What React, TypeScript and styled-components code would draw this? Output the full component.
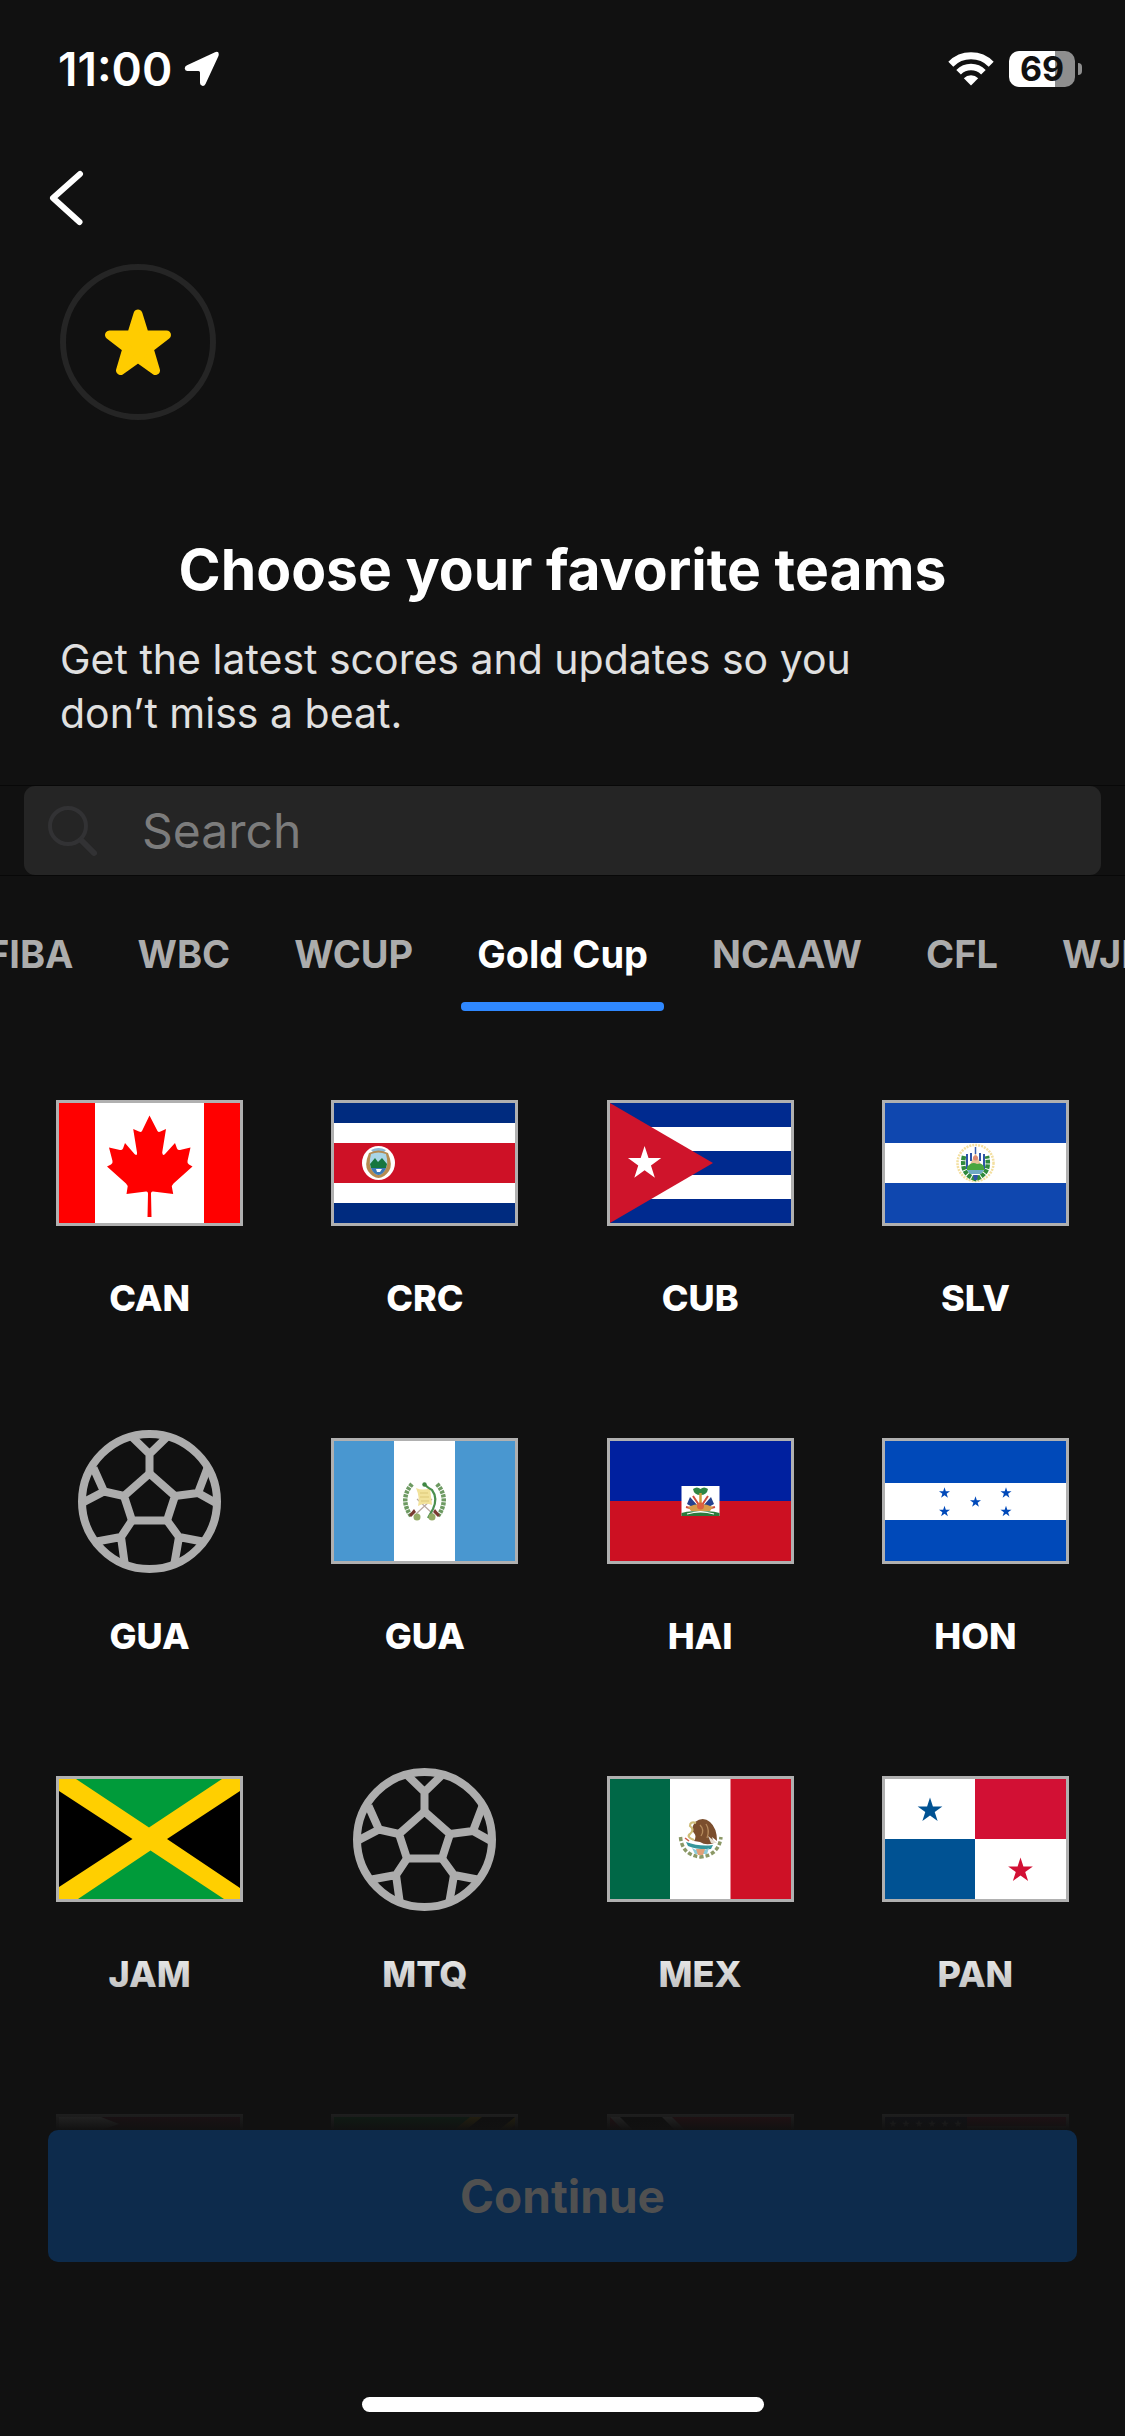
import React, { useLayoutEffect, useRef, useState } from "react";
import styled, { createGlobalStyle } from "styled-components";

const GlobalStyle = createGlobalStyle`
  *, *::before, *::after { box-sizing: border-box; }
  body { margin: 0; background: #111111; }
  button, input { font: inherit; color: inherit; }
`;

const Screen = styled.main`
  display: flex;
  flex-direction: column;
  height: 100vh;
  overflow: hidden;
  background: #111111;
  color: #ffffff;
  font-family: Inter, "Liberation Sans", sans-serif;
`;

const StatusBar = styled.div`
  display: flex;
  align-items: center;
  justify-content: space-between;
  flex: none;
  height: 138px;
  padding: 0 43px 0 58px;
`;

const StatusGroup = styled.div<{ $gap: number }>`
  display: flex;
  align-items: center;
  gap: ${(p) => p.$gap}px;
`;

const Clock = styled.time`
  font-size: 46px;
  line-height: 54px;
  font-weight: 600;
`;

const Battery = styled.div`
  display: flex;
  align-items: center;
  gap: 3px;
`;

const BatteryBody = styled.div`
  display: flex;
  align-items: center;
  justify-content: center;
  width: 66px;
  height: 36px;
  border-radius: 10px;
  background: linear-gradient(to right, #ffffff 69%, #8e8e8e 69%);
  color: #111111;
  font-size: 34px;
  line-height: 36px;
  font-weight: 700;
`;

const BatteryTip = styled.div`
  width: 4px;
  height: 12px;
  border-radius: 0 4px 4px 0;
  background: #8e8e8e;
`;

const BackButton = styled.button`
  display: flex;
  align-items: center;
  justify-content: center;
  flex: none;
  width: 132px;
  height: 120px;
  padding: 0;
  border: 0;
  background: none;
`;

const Intro = styled.header`
  display: flex;
  flex-direction: column;
  flex: none;
  padding: 6px 60px 0;
`;

const StarBadge = styled.div`
  display: flex;
  align-items: center;
  justify-content: center;
  width: 156px;
  height: 156px;
  border: 6px solid #252525;
  border-radius: 50%;
`;

const Title = styled.h1`
  margin: 114px 0 0;
  font-size: 57px;
  line-height: 72px;
  font-weight: 700;
  text-align: center;
`;

const Subtitle = styled.p`
  max-width: 860px;
  margin: 26px 0 0;
  font-size: 41px;
  line-height: 54px;
  color: #e0e0e0;
`;

const SearchBar = styled.div`
  flex: none;
  margin-top: 45px;
  padding: 0 24px;
  border: solid #080808;
  border-width: 1px 0;
`;

const SearchField = styled.label`
  display: flex;
  align-items: center;
  gap: 40px;
  height: 89px;
  padding: 0 24px;
  border-radius: 11px;
  background: #252525;
`;

const SearchInput = styled.input`
  flex: 1;
  min-width: 0;
  padding: 0;
  border: 0;
  outline: 0;
  background: none;
  font-size: 48px;
  line-height: 60px;
  &::placeholder { color: #7c7c7c; opacity: 1; }
`;

const Tabs = styled.div`
  display: flex;
  flex: none;
  gap: 32px;
  margin-top: 54px;
  padding-right: 50%;
  overflow-x: auto;
  scrollbar-width: none;
`;

const Tab = styled.button<{ $active: boolean }>`
  flex: none;
  padding: 0 16px 24px;
  border: 0;
  background: none;
  color: ${(p) => (p.$active ? "#ffffff" : "#acacac")};
  font-size: 38px;
  line-height: 48px;
  font-weight: 700;
  white-space: nowrap;
`;

const TabItem = styled.div<{ $active: boolean }>`
  display: flex;
  flex-direction: column;
  flex: none;
  &::after {
    content: "";
    height: 9px;
    border-radius: 4px;
    background: ${(p) => (p.$active ? "#2f88ff" : "transparent")};
  }
`;

const ListFrame = styled.section`
  position: relative;
  flex: 1;
  min-height: 0;
`;

const TeamList = styled.div`
  display: grid;
  grid-template-columns: repeat(4, minmax(0, 1fr));
  align-content: start;
  row-gap: 88px;
  height: 100%;
  padding: 58px 12px 0;
  overflow-y: auto;
  scrollbar-width: none;
`;

const ListFade = styled.div`
  position: absolute;
  inset: auto 0 0;
  height: 190px;
  background: linear-gradient(to bottom, rgba(17, 17, 17, 0), #111111);
  pointer-events: none;
`;

const TeamButton = styled.button`
  display: flex;
  flex-direction: column;
  align-items: center;
  gap: 20px;
  padding: 0;
  border: 0;
  background: none;
  font-size: 36px;
  line-height: 42px;
  font-weight: 800;
`;

const TeamArt = styled.span`
  display: flex;
  align-items: center;
  justify-content: center;
  width: 187px;
  height: 188px;
`;

const FlagSvg = styled.svg`
  display: block;
  width: 187px;
  height: 126px;
  border: 3px solid #b0b0b0;
`;

const Footer = styled.footer`
  display: flex;
  flex-direction: column;
  align-items: center;
  flex: none;
  padding: 0 48px 24px;
`;

const ContinueButton = styled.button`
  width: 100%;
  height: 132px;
  border: 0;
  border-radius: 10px;
  background: #0d2b4c;
  color: #505050;
  font-size: 46px;
  line-height: 54px;
  font-weight: 700;
`;

const HomeIndicator = styled.div`
  width: 402px;
  height: 15px;
  margin-top: 135px;
  border-radius: 8px;
  background: #ffffff;
`;

/* Points of a five-pointed star centred on (cx, cy). */
function starPoints(cx: number, cy: number, r: number) {
  return Array.from({ length: 10 }, (_, i) => {
    const radius = i % 2 ? r * 0.382 : r;
    const a = (Math.PI / 5) * i - Math.PI / 2;
    return `${(cx + radius * Math.cos(a)).toFixed(2)},${(cy + radius * Math.sin(a)).toFixed(2)}`;
  }).join(" ");
}

const Star = ({ x, y, r, fill }: { x: number; y: number; r: number; fill: string }) => (
  <polygon points={starPoints(x, y, r)} fill={fill} />
);

const Flag = ({ children }: { children: React.ReactNode }) => (
  <FlagSvg viewBox="0 0 181 120" preserveAspectRatio="none" aria-hidden="true">
    {children}
  </FlagSvg>
);

const Canada = () => (
  <Flag>
    <rect width="181" height="120" fill="#ff0000" />
    <rect x="36" width="109" height="120" fill="#ffffff" />
    <path
      fill="#ff0000"
      d="M90.5 12.5 L98.5 28 Q99.5 29.5 101.500 28.500 L107 26 L103.200 49.500 Q103.500 53.500 106 51 L116 40 L118 45.500 Q119 47.500 121 47 L131.500 44.500 L128.500 58 Q128 60.500 130 61.500 L133.500 63.500 L114.500 80.500 Q112.500 82.500 113 84.500 L114.200 91 L94 88.500 Q92 88.300 92 90.500 L92.500 114 H88.500 L89 90.500 Q89 88.300 87 88.500 L67.500 91 L68.500 84.500 Q69 82.500 67 80.500 L48 63.500 L52 61.500 Q54 60.500 53.500 58 L50 44.500 L61 47 Q63 47.500 64 45.500 L66 40 L75.500 51 Q78.500 53.500 78 49.500 L74.200 26 L80 28.500 Q82 29.500 83 28 Z"
    />
  </Flag>
);

const CostaRica = () => (
  <Flag>
    <rect width="181" height="120" fill="#002b7f" />
    <rect y="20" width="181" height="80" fill="#ffffff" />
    <rect y="40" width="181" height="40" fill="#ce1126" />
    <ellipse cx="44.500" cy="60" rx="16.500" ry="17" fill="#ffffff" />
    <path d="M37 47 Q44.500 43 52 47 L49 50 Q44.500 48 40 50Z" fill="#8db9d8" />
    <path d="M35 50 Q44.500 45 54 50 Q59 62 55 68 Q50 75 44.500 75 Q39 75 34 68 Q30 62 35 50Z" fill="#b58b50" />
    <path d="M37 51 Q44.500 48 52 51 Q55 62 51 67 Q48 72 44.500 72 Q41 72 38 67 Q34 62 37 51Z" fill="#a9d5e6" />
    <path d="M36 61 L41 55 L44 59 L48 55 L53 61 L52 65 H37Z" fill="#16763f" />
    <path d="M37 65 H52 Q49 72 44.500 72 Q40 72 37 65Z" fill="#3a78b8" />
    <path d="M42 66 H48 L46 69 H43Z" fill="#ffffff" />
  </Flag>
);

const Cuba = () => (
  <Flag>
    <rect width="181" height="120" fill="#002a8f" />
    <rect y="24" width="181" height="24" fill="#ffffff" />
    <rect y="72" width="181" height="24" fill="#ffffff" />
    <path d="M0 0 L103 60 L0 120Z" fill="#cf142b" />
    <Star x={34.6} y={60.5} r={17.5} fill="#ffffff" />
  </Flag>
);

const ElSalvador = () => (
  <Flag>
    <rect width="181" height="120" fill="#0f47af" />
    <rect y="40" width="181" height="40" fill="#ffffff" />
    <circle cx="90.500" cy="60" r="18" fill="none" stroke="#f3dfa0" strokeWidth="2.500" strokeDasharray="2 1" />
    <path d="M79 53 Q75 71 90.500 76 Q106 71 102 53" fill="none" stroke="#2f8a3c" strokeWidth="4.500" strokeDasharray="4 1" />
    <path d="M82 51 V66 M99 51 V66 M86 50 V58 M95 50 V58" stroke="#2f55a8" strokeWidth="2" />
    <path d="M90.500 50 L98 66 H83Z" fill="#e9c39b" />
    <circle cx="90.500" cy="55" r="2.500" fill="#dd8a72" />
    <path d="M82 64 Q87 58 92 61 Q97 59 99 64 V67 H82Z" fill="#4aa63f" />
    <path d="M82 67 H99 L96 71 H85Z" fill="#6faac4" />
    <path d="M90.500 44 V51" stroke="#3a5fae" strokeWidth="1.500" />
    <path d="M88 72 H93 L92 77 H89Z" fill="#2f55a8" />
  </Flag>
);

const Guatemala = () => (
  <Flag>
    <rect width="181" height="120" fill="#4997d0" />
    <rect x="60" width="61" height="120" fill="#ffffff" />
    <g fill="none" strokeDasharray="3 1">
      <path d="M78 43 Q65 58 77 75" stroke="#6d9a62" strokeWidth="4.500" />
      <path d="M103 43 Q116 58 104 75" stroke="#6d9a62" strokeWidth="4.500" />
    </g>
    <path d="M82 73 L98 58 M99 73 L83 58" stroke="#b9a9a0" strokeWidth="1.200" />
    <path d="M82 47 Q89 50 96 47 L98 64 Q91 61 84 65 Q86 56 82 47Z" fill="#f2e29a" />
    <path d="M86 52 H94 M86 56 H95 M87 60 H95" stroke="#dcc878" strokeWidth="1" />
    <path d="M90 43 Q94 47 98 49 Q104 57 99 68 L94 77" fill="none" stroke="#4b8f4e" strokeWidth="2.200" />
    <circle cx="90.500" cy="43.500" r="2.200" fill="#3f8743" />
    <path d="M75 74 L80 68 L82 71 L77 76Z M106 74 L101 68 L99 71 L104 76Z" fill="#7a3b32" />
    <circle cx="83" cy="76" r="3.500" fill="#94ab66" />
    <circle cx="98" cy="76" r="3.500" fill="#94ab66" />
  </Flag>
);

const Haiti = () => (
  <Flag>
    <rect width="181" height="60" fill="#00209f" />
    <rect y="60" width="181" height="60" fill="#cc1022" />
    <rect x="71.500" y="45" width="38" height="30" fill="#ffffff" />
    <path d="M71.500 75 V72 Q80 69 90.500 71 Q101 69 109.500 72 V75Z" fill="#2c7a3c" />
    <path d="M77 73 Q90.500 69 104 73" fill="none" stroke="#ffffff" strokeWidth="1.200" />
    <path d="M83 48 Q87 45 90.500 48 Q94 45 98 48 Q97 54 90.500 54 Q84 54 83 48Z" fill="#2f8544" />
    <path d="M90.500 52 V68" stroke="#cf9d3a" strokeWidth="2.500" />
    <path d="M77 63 L80 56 L88 65 L86 68Z M104 63 L101 56 L93 65 L95 68Z" fill="#24418f" />
    <path d="M83 55 L89 64 M98 55 L92 64 M76 66 L84 68 M105 66 L97 68" stroke="#cf4b3d" strokeWidth="2" />
    <path d="M78 66 Q90.500 60 103 66 L100 70 H81Z" fill="#d69c4a" />
    <circle cx="90.500" cy="65" r="3.500" fill="#dc6240" />
  </Flag>
);

const Honduras = () => (
  <Flag>
    <rect width="181" height="120" fill="#0049b9" />
    <rect y="42" width="181" height="37" fill="#ffffff" />
    {[[59.5, 52], [59.5, 70.5], [90.5, 61], [121, 52], [121, 70.5]].map(([x, y]) => (
      <Star key={`${x}-${y}`} x={x} y={y} r={5.8} fill="#0049b9" />
    ))}
  </Flag>
);

const Jamaica = () => (
  <Flag>
    <rect width="181" height="120" fill="#ffcf00" />
    <path d="M17 0 H163 L90 48.500Z M19 120 H165 L91.500 71.500Z" fill="#009b3a" />
    <path d="M0 12 L73.500 60 L0 108Z M181 12 L108 60 L181 109Z" fill="#000000" />
  </Flag>
);

const Mexico = () => (
  <Flag>
    <rect width="181" height="120" fill="#ffffff" />
    <rect width="60" height="120" fill="#006847" />
    <rect x="120.500" width="61" height="120" fill="#ce1126" />
    <path d="M70.500 58 Q72 76 90.500 78 Q109 76 111 58" fill="none" stroke="#8b9866" strokeWidth="3.500" strokeDasharray="4 2" />
    <path d="M85 43 Q93 37 100 43 Q107 49 107 62 L102 58 L104 64 Q96 67 90 63 L84 62 Q87 57 84 54 Q80 51 85 43Z" fill="#7b4e2d" />
    <path d="M90 46 Q95 51 91 57 M96 45 Q100 51 97 59" fill="none" stroke="#b58a5c" strokeWidth="1.300" />
    <path d="M98 57 L107 64 L101 64Z" fill="#e8ddd2" />
    <path d="M86 44 Q80 42 80 47 Q85 51 80 55 Q76 58 84 61" fill="none" stroke="#cfbd78" strokeWidth="2.200" />
    <path d="M76 63 Q90 68 103 66 L101 70 Q88 71 78 67Z" fill="#36979b" />
    <path d="M82 69 Q90 74 99 69 L97 75 H85Z" fill="#8ecbd9" />
    <path d="M86 70 H95 L93 76 H88Z" fill="#e2a078" />
    <path d="M75 59 L79 62" stroke="#cc5a48" strokeWidth="1.500" />
  </Flag>
);

const Panama = () => (
  <Flag>
    <rect width="181" height="120" fill="#ffffff" />
    <rect x="90" width="91" height="60" fill="#d21034" />
    <rect y="60" width="90" height="60" fill="#005293" />
    <Star x={45} y={31.5} r={13} fill="#005293" />
    <Star x={135.5} y={91.5} r={13} fill="#d21034" />
  </Flag>
);

const Qatar = () => (
  <Flag>
    <rect width="181" height="120" fill="#ffffff" />
    <path d="M181 0 H42 L60 7 L42 13 L60 20 L42 27 L60 33 L42 40 L60 47 L42 53 L60 60 L42 67 L60 73 L42 80 L60 87 L42 93 L60 100 L42 107 L60 113 L42 120 H181Z" fill="#8a1538" />
  </Flag>
);

const SaintKitts = () => (
  <Flag>
    <rect width="181" height="120" fill="#009739" />
    <path d="M181 0 V120 H0Z" fill="#c8102e" />
    <path d="M-10 120 L136 0 H191 L41 120Z" fill="#ffcd00" />
    <path d="M0 120 L148 0 H181 L33 120Z" fill="#000000" />
  </Flag>
);

const Trinidad = () => (
  <Flag>
    <rect width="181" height="120" fill="#da1a35" />
    <path d="M0 0 H62 L181 120 H119Z" fill="#ffffff" />
    <path d="M10 0 H52 L171 120 H129Z" fill="#000000" />
  </Flag>
);

const UnitedStates = () => (
  <Flag>
    <rect width="181" height="120" fill="#ffffff" />
    {[0, 1, 2, 3, 4, 5, 6].map((i) => (
      <rect key={i} y={i * 18.5} width="181" height="9.250" fill="#bb133e" />
    ))}
    <rect width="82" height="65" fill="#1a2350" />
    {[8, 21, 34, 47, 60, 73].map((x) => (
      <Star key={x} x={x} y={7} r={4} fill="#ffffff" />
    ))}
  </Flag>
);

const Ball = () => (
  <svg width="143" height="143" viewBox="0 0 143 143" fill="none" stroke="#adadad" strokeWidth="8" aria-hidden="true">
    <circle cx="71.500" cy="71.500" r="67.500" />
    <path d="M71.500 43.500 L97 66 L89 90.500 H54 L46 66Z" />
    <path d="M71.500 43.500 V24 M53 6 L71.500 24 L90 6" />
    <path d="M97 66 L120 63 M129.500 38 L120 63 L138 73" />
    <path d="M46 66 L26 61.500 M15.500 38 L26 61.500 L4 73" />
    <path d="M89 90.500 L101 107 M127 112 L101 107 L96 136" />
    <path d="M54 90.500 L43 107 M16 112 L43 107 L47 136" />
  </svg>
);

const LocationArrow = () => (
  <svg width="36" height="36" viewBox="0 0 36 36" aria-hidden="true">
    <path
      d="M31 1.200 Q35.500 -0.300 34.600 4.500 Q34.400 5.300 34 6 L21.500 33 Q20.300 35.300 18.200 34.800 Q16 34.300 16 32 V21.500 Q16 20 14.500 20 H3.500 Q1.200 20 0.800 17.800 Q0.500 15.500 3 14.300Z"
      fill="#ffffff"
    />
  </svg>
);

const Wifi = () => (
  <svg width="46" height="34" viewBox="0 0 46 34" aria-hidden="true">
    <g fill="none" stroke="#ffffff">
      <path d="M2.800 12.200 A28.500 28.500 0 0 1 43.200 12.200" strokeWidth="7" />
      <path d="M10.600 20.200 A17.500 17.500 0 0 1 35.400 20.200" strokeWidth="6.500" />
    </g>
    <path d="M23 33.500 L15.800 26.300 A10.200 10.200 0 0 1 30.200 26.300Z" fill="#ffffff" />
  </svg>
);

const BackIcon = () => (
  <svg width="36" height="56" viewBox="0 0 36 56" fill="none" stroke="#ffffff" strokeWidth="6" strokeLinecap="round" strokeLinejoin="round" aria-hidden="true">
    <path d="M32 4 L5 28 L31.500 52" />
  </svg>
);

const FavoriteStar = () => (
  <svg width="66" height="68" viewBox="0 0 66 68" aria-hidden="true">
    <path
      d="M33 6 L39.500 27 H61.500 L44 40.500 L50.500 62.500 L33 50 L15.500 62.500 L22 40.500 L4.500 27 H26.500Z"
      fill="#ffcc00"
      stroke="#ffcc00"
      strokeWidth="9"
      strokeLinejoin="round"
    />
  </svg>
);

const SearchIcon = () => (
  <svg width="54" height="54" viewBox="0 0 54 54" fill="none" stroke="#323234" strokeLinecap="round" aria-hidden="true">
    <circle cx="20" cy="22" r="18" strokeWidth="4" />
    <path d="M34 37 L46 49" strokeWidth="6" />
  </svg>
);

const leagues = ["FIBA", "WBC", "WCUP", "Gold Cup", "NCAAW", "CFL", "WJHC"];

const teams: { id: string; code: string; Art: React.ComponentType }[] = [
  { id: "canada", code: "CAN", Art: Canada },
  { id: "costa-rica", code: "CRC", Art: CostaRica },
  { id: "cuba", code: "CUB", Art: Cuba },
  { id: "el-salvador", code: "SLV", Art: ElSalvador },
  { id: "guadeloupe", code: "GUA", Art: Ball },
  { id: "guatemala", code: "GUA", Art: Guatemala },
  { id: "haiti", code: "HAI", Art: Haiti },
  { id: "honduras", code: "HON", Art: Honduras },
  { id: "jamaica", code: "JAM", Art: Jamaica },
  { id: "martinique", code: "MTQ", Art: Ball },
  { id: "mexico", code: "MEX", Art: Mexico },
  { id: "panama", code: "PAN", Art: Panama },
  { id: "qatar", code: "QAT", Art: Qatar },
  { id: "saint-kitts", code: "SKN", Art: SaintKitts },
  { id: "trinidad", code: "TRI", Art: Trinidad },
  { id: "united-states", code: "USA", Art: UnitedStates },
];

export default function App() {
  const [league, setLeague] = useState("Gold Cup");
  const [query, setQuery] = useState("");
  const tabsRef = useRef<HTMLDivElement>(null);

  /* Keep the selected league in the middle of the strip. */
  useLayoutEffect(() => {
    const strip = tabsRef.current;
    const item = strip?.querySelector<HTMLElement>('[aria-selected="true"]');
    if (!strip || !item) return;
    const s = strip.getBoundingClientRect();
    const t = item.getBoundingClientRect();
    strip.scrollLeft += t.left + t.width / 2 - (s.left + s.width / 2);
  }, [league]);

  return (
    <>
      <GlobalStyle />
      <Screen>
        <StatusBar>
          <StatusGroup $gap={12}>
            <Clock>11:00</Clock>
            <LocationArrow />
          </StatusGroup>
          <StatusGroup $gap={15}>
            <Wifi />
            <Battery>
              <BatteryBody>69</BatteryBody>
              <BatteryTip />
            </Battery>
          </StatusGroup>
        </StatusBar>

        <BackButton type="button" aria-label="Back">
          <BackIcon />
        </BackButton>

        <Intro>
          <StarBadge>
            <FavoriteStar />
          </StarBadge>
          <Title>Choose your favorite teams</Title>
          <Subtitle>Get the latest scores and updates so you don’t miss a beat.</Subtitle>
        </Intro>

        <SearchBar>
          <SearchField>
            <SearchIcon />
            <SearchInput
              type="text"
              aria-label="Search"
              placeholder="Search"
              value={query}
              onChange={(e) => setQuery(e.target.value)}
            />
          </SearchField>
        </SearchBar>

        <Tabs ref={tabsRef} role="tablist">
          {leagues.map((name) => (
            <TabItem key={name} $active={name === league} role="presentation">
              <Tab
                type="button"
                role="tab"
                aria-selected={name === league}
                $active={name === league}
                onClick={() => setLeague(name)}
              >
                {name}
              </Tab>
            </TabItem>
          ))}
        </Tabs>

        <ListFrame>
          <TeamList>
            {teams.map(({ id, code, Art }) => (
              <TeamButton key={id} type="button">
                <TeamArt>
                  <Art />
                </TeamArt>
                {code}
              </TeamButton>
            ))}
          </TeamList>
          <ListFade />
        </ListFrame>

        <Footer>
          <ContinueButton type="button" disabled>
            Continue
          </ContinueButton>
          <HomeIndicator />
        </Footer>
      </Screen>
    </>
  );
}
